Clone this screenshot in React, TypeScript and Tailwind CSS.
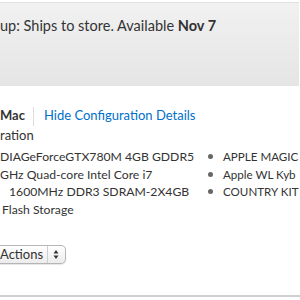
export default function App() {
  const specs = [
    { left: "DIAGeForceGTX780M 4GB GDDR5", right: "APPLE MAGIC", pad: "" },
    { left: "GHz Quad-core Intel Core i7", right: "Apple WL Kyb", pad: "" },
    { left: "1600MHz DDR3 SDRAM-2X4GB", right: "COUNTRY KIT", pad: "pl-[9px]" },
    { left: "Flash Storage", right: "", pad: "pl-[2px]" },
  ];

  return (
    <div className="w-[300px] h-[300px] overflow-hidden bg-white text-[#333] font-['Lato',sans-serif]">
      {/* Pickup banner */}
      <div className="mt-[2px] h-[84px] w-[299px] border-t border-[#e2e2e2] bg-gradient-to-b from-[#f1f1f1] to-[#e5e5e5] pt-[13px]">
        <p className="text-[14.5px] leading-[20px] whitespace-nowrap">
          up: Ships to store. Available <span className="font-bold">Nov 7</span>
        </p>
      </div>

      {/* Config header */}
      <div className="mt-[20px] flex items-center h-[20px] text-[13px] whitespace-nowrap">
        <span className="w-[23px] font-bold">Mac</span>
        <span className="ml-[10px] mr-[10px] h-[19px] w-px bg-[#dcdcdc]" />
        <span className="text-[#0070c9]">Hide Configuration Details</span>
      </div>
      <p className="text-[13px] leading-[18px] whitespace-nowrap">ration</p>

      {/* Specs */}
      <div className="mt-[4px] flex flex-col text-[12.2px] leading-[17.5px] whitespace-nowrap">
        {specs.map((s) => (
          <div key={s.left} className="flex">
            <span className={`w-[208px] shrink-0 ${s.pad}`}>{s.left}</span>
            {s.right && (
              <span className="flex items-center text-[11.6px]">
                <span className="mr-[10px] h-[5px] w-[5px] rounded-full bg-[#666]" />
                {s.right}
              </span>
            )}
          </div>
        ))}
      </div>

      {/* Actions select */}
      <div className="mt-[27px] flex">
        <div className="flex h-[19px] items-center rounded-r-[5px] border border-l-0 border-[#b5b5b5] bg-gradient-to-b from-white to-[#ececec] text-[13px] shadow-[0_1px_1px_rgba(0,0,0,0.1)]">
          <span className="w-[47px]">Actions</span>
          <span className="h-full w-px bg-[#cfcfcf]" />
          <svg width="17" height="17" viewBox="0 0 17 17">
            <path d="M5.5 7.5 L8 4 L10.5 7.5 Z" fill="#333" />
            <path d="M5.5 9.5 L8 13 L10.5 9.5 Z" fill="#333" />
          </svg>
        </div>
      </div>

      <div className="mt-[31px] h-[2px] bg-[#d0d0d0]" />
    </div>
  );
}
